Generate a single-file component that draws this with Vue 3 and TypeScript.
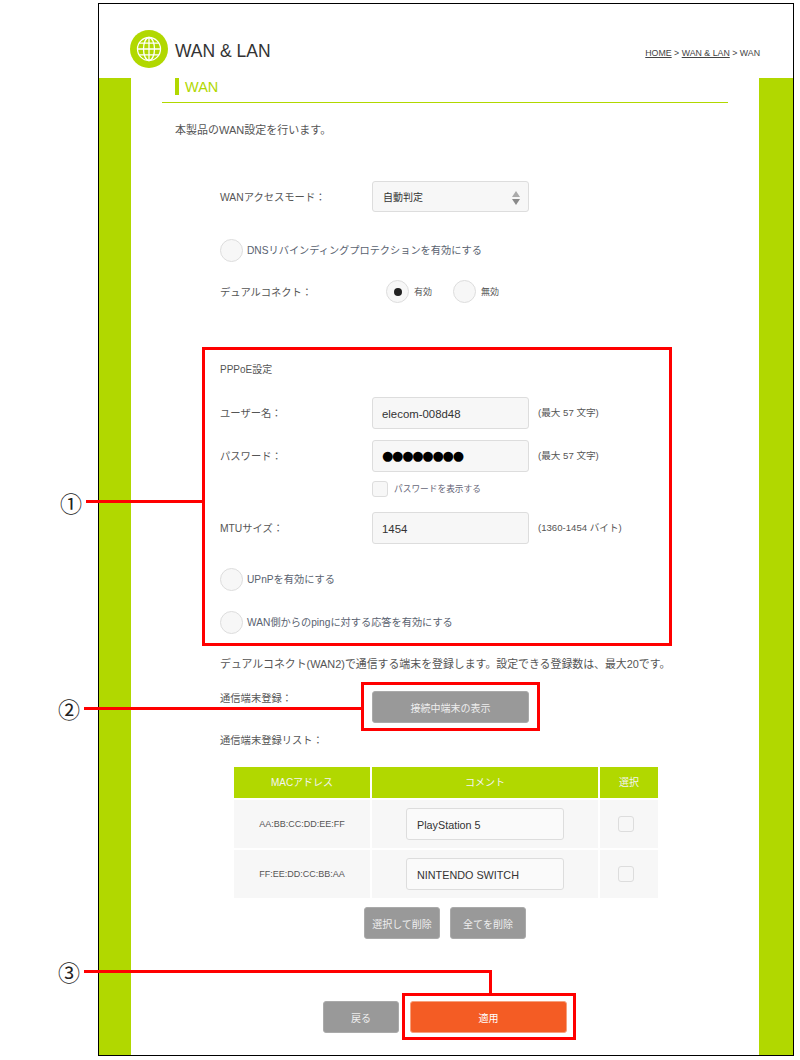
<template>
  <div class="page">
    <div class="frame">
      <header class="top">
        <div class="logo">
          <svg viewBox="0 0 38 38" width="38" height="38">
            <circle cx="19" cy="19" r="19" fill="#b1d800" />
            <g fill="none" stroke="#fff" stroke-width="1.3">
              <circle cx="19" cy="19" r="11.5" />
              <ellipse cx="19" cy="19" rx="5.5" ry="11.5" />
              <path d="M19 7.5v23M7.5 19h23M9.2 13.2h19.6M9.2 24.8h19.6" />
            </g>
          </svg>
        </div>
        <h1 class="title">WAN &amp; LAN</h1>
        <div class="crumbs"><u>HOME</u> &gt; <u>WAN &amp; LAN</u> &gt; WAN</div>
      </header>

      <div class="body">
        <div class="side"></div>
        <main class="main">
          <h2 class="heading"><span>WAN</span></h2>
          <p class="intro">本製品のWAN設定を行います。</p>

          <div class="form">
            <div class="row select-row">
              <label class="label">WANアクセスモード：</label>
              <div class="field select">
                自動判定
                <svg viewBox="0 0 8 14" width="8" height="14">
                  <path fill="#ababab" d="M4 0l4 6H0z" />
                  <path fill="#8a8a8a" d="M0 8h8l-4 6z" />
                </svg>
              </div>
            </div>

            <div class="toggle dns"><i class="radio"></i>DNSリバインディングプロテクションを有効にする</div>

            <div class="row dual">
              <label class="label">デュアルコネクト：</label>
              <div class="choices">
                <span class="choice"><i class="radio on"></i>有効</span>
                <span class="choice"><i class="radio"></i>無効</span>
              </div>
            </div>

            <section class="pppoe">
              <div class="pppoe-title">PPPoE設定</div>
              <div class="row input-row first">
                <label class="label">ユーザー名：</label>
                <div class="field">elecom-008d48</div>
                <span class="hint">(最大 57 文字)</span>
              </div>
              <div class="row input-row">
                <label class="label">パスワード：</label>
                <div class="field dots">●●●●●●●●</div>
                <span class="hint">(最大 57 文字)</span>
              </div>
              <div class="show-pass"><i class="check"></i>パスワードを表示する</div>
              <div class="row input-row mtu">
                <label class="label">MTUサイズ：</label>
                <div class="field">1454</div>
                <span class="hint">(1360-1454 バイト)</span>
              </div>
              <div class="toggle upnp"><i class="radio"></i>UPnPを有効にする</div>
              <div class="toggle ping"><i class="radio"></i>WAN側からのpingに対する応答を有効にする</div>
            </section>

            <p class="note">デュアルコネクト(WAN2)で通信する端末を登録します。設定できる登録数は、最大20です。</p>

            <div class="row register">
              <label class="label">通信端末登録：</label>
              <div class="register-btn">
                <button class="btn wide">接続中端末の表示</button>
                <span class="mark mark-two"></span>
              </div>
            </div>

            <div class="list-label">通信端末登録リスト：</div>

            <div class="table">
              <div class="th">MACアドレス</div>
              <div class="th">コメント</div>
              <div class="th">選択</div>
              <template v-for="item in devices" :key="item.mac">
                <div class="td mac">{{ item.mac }}</div>
                <div class="td"><div class="field comment">{{ item.comment }}</div></div>
                <div class="td"><i class="check pick"></i></div>
              </template>
            </div>

            <div class="table-actions">
              <button class="btn">選択して削除</button>
              <button class="btn">全てを削除</button>
            </div>

            <div class="actions">
              <button class="btn">戻る</button>
              <div class="apply-wrap">
                <button class="btn apply">適用</button>
                <span class="mark mark-three"></span>
              </div>
            </div>
          </div>
        </main>
        <div class="side right"></div>
      </div>
    </div>

    <!-- 注釈 -->
    <span class="num n1">①</span>
    <span class="num n2">②</span>
    <span class="num n3">③</span>
    <span class="line l1"></span>
    <span class="line l2"></span>
    <span class="line l3"></span>
    <span class="line l3v"></span>
  </div>
</template>

<script setup lang="ts">
const devices = [
  { mac: 'AA:BB:CC:DD:EE:FF', comment: 'PlayStation 5' },
  { mac: 'FF:EE:DD:CC:BB:AA', comment: 'NINTENDO SWITCH' },
];
</script>

<style>
html,
body {
  margin: 0;
  background: #fff;
  overflow: hidden;
}
</style>

<style scoped>
.page {
  position: relative;
  width: 800px;
  height: 1060px;
  padding-top: 3px;
  box-sizing: border-box;
  font-family: "Liberation Sans", "Noto Sans CJK JP", sans-serif;
  font-size: 11px;
  line-height: 16px;
  color: #555;
}

.frame {
  margin-left: 98px;
  width: 696px;
  height: 1053px;
  box-sizing: border-box;
  border: 1px solid #000;
  display: flex;
  flex-direction: column;
}

.top {
  height: 74px;
  flex: none;
  display: flex;
  align-items: center;
  padding: 16px 33px 0 31px;
  box-sizing: border-box;
}

.logo {
  height: 38px;
}

.title {
  margin: 4px 0 0 7px;
  font-size: 17.5px;
  font-weight: normal;
  color: #333;
}

.crumbs {
  margin-left: auto;
  margin-top: 8px;
  font-size: 8.8px;
  color: #444;
}

.body {
  flex: 1;
  display: flex;
}

.side {
  width: 32px;
  flex: none;
  background: #b1d800;
}

.side.right {
  width: 34px;
}

.main {
  flex: 1;
  padding: 0 31px;
  min-width: 0;
}

.heading {
  height: 24px;
  margin: 0;
  border-bottom: 1px solid #b1d800;
  padding-left: 13px;
  font-size: 14.5px;
  font-weight: normal;
  color: #b1d800;
}

.heading span {
  display: block;
  height: 17px;
  line-height: 18px;
  border-left: 4px solid #b1d800;
  padding-left: 6px;
}

.intro {
  margin: 19px 0 0 13px;
}

.form {
  padding-left: 58px;
}

.row {
  display: flex;
  align-items: center;
}

.label {
  width: 152px;
  flex: none;
  padding-top: 2px;
  font-size: 10.3px;
}

.select-row {
  margin-top: 43px;
}

.field {
  width: 157px;
  height: 32px;
  box-sizing: border-box;
  flex: none;
  display: flex;
  align-items: center;
  padding: 2px 0 0 9px;
  background: #f7f7f7;
  border: 1px solid #ddd;
  border-radius: 3px;
  font-size: 11.4px;
  color: #333;
}

.select {
  height: 31px;
  justify-content: space-between;
  padding-left: 10px;
  padding-right: 8px;
  font-size: 10px;
}

.dots {
  padding-top: 0;
  font-size: 13px;
  letter-spacing: -1.25px;
  color: #000;
  font-family: "DejaVu Sans", sans-serif;
}

.toggle {
  display: flex;
  align-items: center;
  gap: 4px;
  height: 23px;
  font-size: 10.2px;
  color: #596270;
}

.radio {
  display: inline-block;
  position: relative;
  width: 23px;
  height: 23px;
  box-sizing: border-box;
  flex: none;
  background: #f7f7f7;
  border: 1px solid #ddd;
  border-radius: 50%;
}

.radio.on::after {
  content: "";
  position: absolute;
  left: 6.5px;
  top: 6.5px;
  width: 8px;
  height: 8px;
  background: #222;
  border-radius: 50%;
}

.dns {
  margin-top: 27px;
}

.dual {
  margin-top: 18px;
}

.choices {
  display: flex;
  gap: 21px;
  margin-left: 14px;
}

.choice {
  display: flex;
  align-items: center;
  gap: 5px;
  font-size: 9px;
}

.pppoe {
  width: 470px;
  height: 299px;
  margin: 44px 0 0 -18px;
  padding: 12px 15px 0;
  box-sizing: border-box;
  border: 3px solid #f00;
}

.pppoe-title {
  font-size: 10px;
}

.input-row {
  margin-top: 11px;
}

.input-row.first {
  margin-top: 19px;
}

.hint {
  margin-left: 9px;
  font-size: 9.6px;
}

.show-pass {
  display: flex;
  align-items: center;
  gap: 6px;
  margin: 9px 0 0 152px;
  font-size: 8.7px;
  color: #667;
}

.check {
  display: block;
  width: 16px;
  height: 16px;
  box-sizing: border-box;
  flex: none;
  background: #f7f7f7;
  border: 1px solid #ddd;
  border-radius: 3px;
}

.check.pick {
  margin-right: 6px;
}

.input-row.mtu {
  margin-top: 15px;
}

.upnp {
  margin-top: 24px;
}

.ping {
  margin-top: 20px;
}

.note {
  margin: 10px 0 0;
  font-size: 10.9px;
}

.register {
  align-items: flex-start;
  margin-top: 17px;
}

.register-btn {
  position: relative;
  margin-top: 2px;
}

.btn {
  display: block;
  width: 76px;
  height: 32px;
  padding: 0;
  border: 1px solid #aaa;
  border-radius: 3px;
  background: #999;
  color: #eee;
  font: 10px "Liberation Sans", "Noto Sans CJK JP", sans-serif;
}

.btn.wide {
  width: 157px;
}

.list-label {
  margin-top: 10px;
  font-size: 10.3px;
}

.table {
  display: grid;
  grid-template-columns: 136px 226px 58px;
  grid-template-rows: 31px 48px 48px;
  gap: 2px;
  margin: 18px 0 0 14px;
  width: 424px;
}

.th {
  display: flex;
  align-items: center;
  justify-content: center;
  background: #b1d800;
  color: #f4f4f4;
  font-size: 10px;
}

.td {
  display: flex;
  align-items: center;
  justify-content: center;
  background: #f7f7f7;
}

.td.mac {
  font-size: 9px;
}

.comment {
  width: 158px;
  padding-left: 10px;
  background: #fafafa;
  font-size: 10.8px;
}

.table-actions {
  display: flex;
  gap: 10px;
  margin: 9px 0 0 144px;
}

.actions {
  display: flex;
  gap: 11px;
  margin: 62px 0 0 103px;
}

.apply-wrap {
  position: relative;
}

.btn.apply {
  width: 157px;
  background: #f45c24;
  border-color: #f7a07c;
  color: #fff;
}

.mark {
  position: absolute;
  border: 3px solid #f00;
  box-sizing: border-box;
  pointer-events: none;
}

.mark-two {
  left: -11px;
  top: -9px;
  width: 179px;
  height: 49px;
}

.mark-three {
  left: -8px;
  top: -8px;
  width: 174px;
  height: 47px;
}

.num {
  position: absolute;
  font-family: "Noto Sans CJK JP", sans-serif;
  font-size: 22px;
  line-height: 22px;
  color: #222;
}

.n1 {
  left: 60px;
  top: 491px;
}

.n2 {
  left: 58px;
  top: 697px;
}

.n3 {
  left: 58px;
  top: 960px;
}

.line {
  position: absolute;
  background: #f00;
  height: 3px;
}

.l1 {
  left: 86px;
  top: 500px;
  width: 118px;
}

.l2 {
  left: 84px;
  top: 707px;
  width: 277px;
}

.l3 {
  left: 84px;
  top: 970px;
  width: 408px;
}

.l3v {
  left: 489px;
  top: 970px;
  width: 3px;
  height: 24px;
}
</style>
